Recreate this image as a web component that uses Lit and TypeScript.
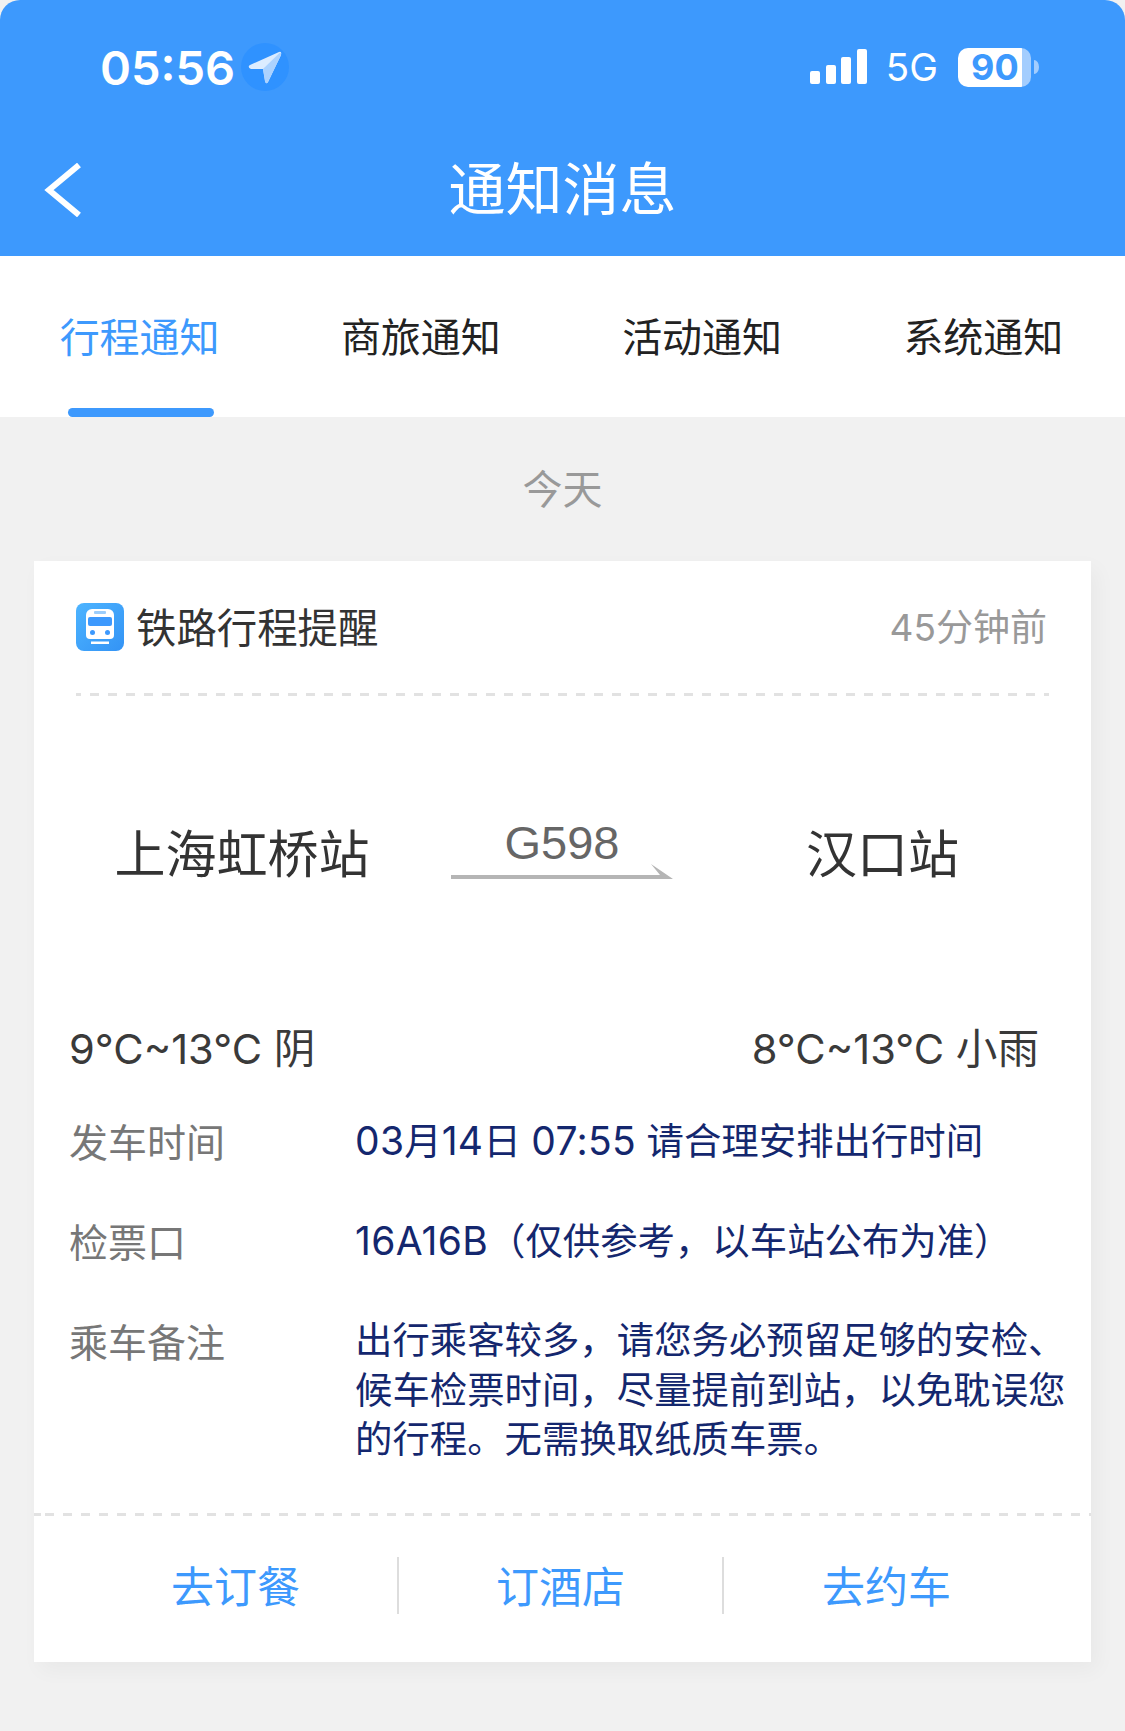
import { LitElement, css, html } from 'lit'
import { customElement } from 'lit/decorators.js'

const TABS = ['行程通知', '商旅通知', '活动通知', '系统通知']
const ACTIONS = ['去订餐', '订酒店', '去约车']
const INFO = [
  { label: '发车时间', value: ['03月14日 07:55 请合理安排出行时间'] },
  { label: '检票口', value: ['16A16B（仅供参考，以车站公布为准）'] },
  {
    label: '乘车备注',
    value: ['出行乘客较多，请您务必预留足够的安检、', '候车检票时间，尽量提前到站，以免耽误您', '的行程。无需换取纸质车票。'],
  },
]

@customElement('app-root')
export class AppRoot extends LitElement {
  static styles = css`
    :host {
      display: block;
      width: 1125px;
      height: 1731px;
      overflow: hidden;
      background: #f1f1f1;
      font-family: Inter, 'Noto Sans CJK SC', sans-serif;
      color: #333;
    }

    .top {
      height: 256px;
      background: #3d99fd;
      border-radius: 20px 20px 0 0;
      color: #fff;
      display: flex;
      flex-direction: column;
    }

    .status {
      height: 134px;
      display: flex;
      align-items: center;
      padding: 0 86px 0 100px;
    }
    .time {
      font-size: 47px;
      font-weight: 600;
      line-height: 1;
    }
    .loc { margin-left: 6px; }
    .spacer { flex: 1; }
    .bars { margin-bottom: 2px; }
    .net {
      font-size: 38.500px;
      margin: 0 20px 0 19px;
    }
    .batt {
      width: 73px;
      height: 39px;
      border-radius: 10px;
      background: linear-gradient(90deg, #fff 0 88%, #a3cdfe 88%);
      color: #3d99fd;
      font-size: 36px;
      font-weight: 700;
      line-height: 39px;
      padding-left: 13px;
      box-sizing: border-box;
    }
    .batt-tip { margin-left: 3px; }

    .nav {
      flex: 1;
      display: grid;
      grid-template-columns: 120px 1fr 120px;
      align-items: center;
      padding-bottom: 10px;
    }
    .back { padding-left: 43px; display: flex; }
    .title {
      text-align: center;
      font-size: 57px;
      line-height: 70px;
    }

    .tabs {
      height: 161px;
      background: #fff;
      display: grid;
      grid-template-columns: repeat(4, 1fr);
    }
    .tab {
      display: flex;
      flex-direction: column;
      align-items: center;
      justify-content: flex-end;
      font-size: 40px;
      color: #222;
    }
    .tab span { flex: 1; display: flex; align-items: center; padding: 6px 2px 0 0; }
    .tab i { display: block; width: 146px; height: 9px; border-radius: 5px; }
    .tab.on { color: #3d99fd; }
    .tab.on i { background: #3d99fd; }

    .day {
      height: 144px;
      display: flex;
      align-items: center;
      justify-content: center;
      font-size: 40px;
      color: #999;
      padding-bottom: 4px;
      box-sizing: border-box;
    }

    .card {
      margin: 0 34px;
      height: 1101px;
      background: #fff;
      box-shadow: 6px 8px 20px rgba(0, 0, 0, 0.04);
      display: flex;
      flex-direction: column;
    }

    .card-head {
      height: 132px;
      margin: 0 42px;
      display: flex;
      align-items: center;
      box-sizing: border-box;
    }
    .card-title { font-size: 40.400px; margin: 0 0 4px 12px; flex: 1; }
    .ago { font-size: 37px; color: #999; margin: 0 2px 4px 0; }
    .dash-head {
      flex: none;
      height: 3px;
      margin: 0 42px;
      background: repeating-linear-gradient(90deg, #e2e2e2 0 9px, transparent 9px 18px) -4px 0;
    }

    .route {
      height: 316px;
      display: grid;
      grid-template-columns: 416px 224px 1fr;
      align-items: center;
      font-size: 51px;
    }
    .from, .to { text-align: center; padding-bottom: 6px; }
    .train {
      display: flex;
      flex-direction: column;
      align-items: center;
      font-family: 'Liberation Sans', sans-serif;
      font-size: 47px;
      line-height: 1;
      color: #666;
      padding-bottom: 10px;
    }
    .train svg { display: block; margin-top: -2px; }

    .temps {
      height: 64px;
      padding: 0 52px 0 35px;
      display: flex;
      justify-content: space-between;
      align-items: center;
      font-size: 41.600px;
      margin-top: 2px;
      color: #3a3a3a;
    }

    .info {
      flex: 1;
      padding: 40px 26px 0 35px;
      display: flex;
      flex-direction: column;
      gap: 50px;
    }
    .row {
      display: grid;
      grid-template-columns: 286px 1fr;
    }
    .label { font-size: 39px; color: #777; line-height: 50px; }
    .value {
      font-size: 37.400px;
      color: #14276e;
      line-height: 49.500px;
      margin-top: -2px;
      white-space: nowrap;
    }
    .num { font-size: 39px; letter-spacing: 0.3px; }

    .dash-foot {
      flex: none;
      height: 3px;
      background: repeating-linear-gradient(90deg, #e2e2e2 0 9px, transparent 9px 18px) 11px 0;
    }
    .actions {
      height: 146px;
      padding: 0 41px 8px 40px;
      display: grid;
      grid-template-columns: repeat(3, 325px);
      align-items: center;
      box-sizing: border-box;
    }
    .action {
      height: 57px;
      display: flex;
      align-items: center;
      justify-content: center;
      font-size: 43px;
      color: #3d99fd;
      border-right: 2px solid #ddd;
      padding-bottom: 3px;
      box-sizing: border-box;
    }
    .action:last-child { border-right: none; }
  `

  private renderTrainIcon() {
    return html`<svg width="48" height="48" viewBox="0 0 48 48">
      <defs>
        <linearGradient id="tg" x1="0" y1="0" x2="1" y2="1">
          <stop offset="0" stop-color="#4db4ff" />
          <stop offset="1" stop-color="#3393f5" />
        </linearGradient>
      </defs>
      <rect width="48" height="48" rx="8" fill="url(#tg)" />
      <path d="M16 6h16a6 6 0 0 1 6 6v20a4 4 0 0 1-4 4H14a4 4 0 0 1-4-4V12a6 6 0 0 1 6-6z" fill="#fff" />
      <rect x="18" y="8" width="12" height="3" rx="1" fill="#9ccdfb" />
      <rect x="12" y="14" width="24" height="9" rx="2" fill="#3d99fd" />
      <circle cx="16.500" cy="29.500" r="2.500" fill="#3d99fd" />
      <circle cx="31.500" cy="29.500" r="2.500" fill="#3d99fd" />
      <rect x="15" y="38.500" width="18" height="2.500" fill="#fff" />
    </svg>`
  }

  // latin and digits run a little larger than the CJK around them
  private renderLine(line: string) {
    return line
      .split(/([0-9A-Z:]+(?: [0-9:]+)?)/)
      .map((part, i) => (i % 2 ? html`<span class="num">${part}</span>` : part))
  }

  render() {
    return html`
      <div class="top">
        <div class="status">
          <span class="time">05:56</span>
          <svg class="loc" width="48" height="48" viewBox="0 0 48 48">
            <circle cx="24" cy="24" r="24" fill="#2f92ff" />
            <path d="M9 22 L38 9 Q41 8 40 12 L27 39 Q25 42 24 38 L22 26 L10 26 Q6 24 9 22z" fill="#dcecff" />
            <path d="M39 9.500 L22 26 L24 38 Q25 42 27 39 L40 12 Q40.500 10 39 9.500z" fill="#acd2fe" />
          </svg>
          <span class="spacer"></span>
          <svg class="bars" width="57" height="35" viewBox="0 0 57 35" fill="#fff">
            <rect x="0" y="22" width="10" height="13" rx="2" />
            <rect x="16" y="16" width="10" height="19" rx="2" />
            <rect x="31" y="8" width="10" height="27" rx="2" />
            <rect x="47" y="0" width="10" height="35" rx="2" />
          </svg>
          <span class="net">5G</span>
          <div class="batt">90</div>
          <svg class="batt-tip" width="5" height="14" viewBox="0 0 5 14"><path d="M0 0a5 7 0 0 1 0 14z" fill="#a3cdfe" /></svg>
        </div>
        <div class="nav">
          <div class="back">
            <svg width="40" height="54" viewBox="0 0 40 54" fill="none" stroke="#fff" stroke-width="6">
              <path d="M36 2 L6 27 L36 52" />
            </svg>
          </div>
          <div class="title">通知消息</div>
        </div>
      </div>

      <div class="tabs">
        ${TABS.map((t, i) => html`<div class="tab ${i === 0 ? 'on' : ''}"><span>${t}</span><i></i></div>`)}
      </div>

      <div class="day">今天</div>

      <div class="card">
        <div class="card-head">
          ${this.renderTrainIcon()}
          <span class="card-title">铁路行程提醒</span>
          <span class="ago">45分钟前</span>
        </div>
        <div class="dash-head"></div>
        <div class="route">
          <div class="from">上海虹桥站</div>
          <div class="train">
            G598
            <svg width="222" height="15" viewBox="0 0 222 15">
              <path d="M0 11h209L200 0l22 15H0z" fill="#b5b5b5" />
            </svg>
          </div>
          <div class="to">汉口站</div>
        </div>
        <div class="temps">
          <span>9°C~13°C 阴</span>
          <span>8°C~13°C 小雨</span>
        </div>
        <div class="info">
          ${INFO.map(
            (r) => html`
              <div class="row">
                <div class="label">${r.label}</div>
                <div class="value">${r.value.map((l) => html`<div>${this.renderLine(l)}</div>`)}</div>
              </div>
            `,
          )}
        </div>
        <div class="dash-foot"></div>
        <div class="actions">
          ${ACTIONS.map((a) => html`<div class="action">${a}</div>`)}
        </div>
      </div>
    `
  }
}
